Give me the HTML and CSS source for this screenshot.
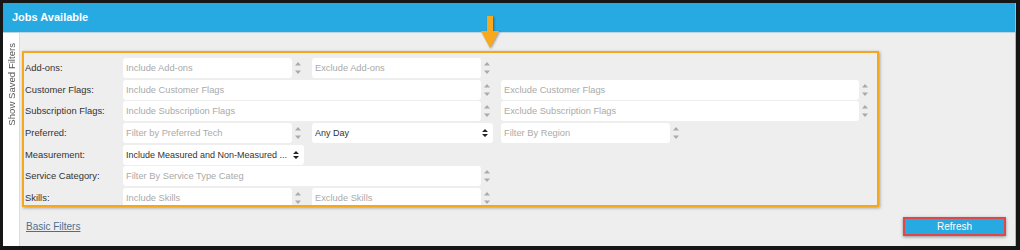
FILE: index.html
```html
<!DOCTYPE html>
<html lang="en">
<head>
    <meta charset="UTF-8">
    <meta name="viewport" content="width=device-width, initial-scale=1.0">
    <title>Jobs Available</title>
    <link rel="stylesheet" href="styles.css">
</head>
<body>

    <div class="panel">
        <div class="panel-head">Jobs Available</div>

        <div class="panel-body">
            <!-- Saved filters tab -->
            <div class="saved-tab"><span>Show Saved Filters</span></div>

            <div class="filters-area">
                <div class="filter-box">
                    <div class="filter-grid">
                        <div class="label">Add-ons:</div>
                        <div class="field"><span class="box-input">Include Add-ons</span><span class="spin"><svg width="6" height="12" viewBox="0 0 6 12"><path d="M0 3.5L3 0L6 3.5Z M0 8.5L6 8.5L3 12Z" fill="#aaa"/></svg></span></div>
                        <div class="field"><span class="box-input">Exclude Add-ons</span><span class="spin"><svg width="6" height="12" viewBox="0 0 6 12"><path d="M0 3.5L3 0L6 3.5Z M0 8.5L6 8.5L3 12Z" fill="#aaa"/></svg></span></div>

                        <div class="label">Customer Flags:</div>
                        <div class="field wide"><span class="box-input">Include Customer Flags</span><span class="spin"><svg width="6" height="12" viewBox="0 0 6 12"><path d="M0 3.5L3 0L6 3.5Z M0 8.5L6 8.5L3 12Z" fill="#aaa"/></svg></span></div>
                        <div class="field wide"><span class="box-input">Exclude Customer Flags</span><span class="spin"><svg width="6" height="12" viewBox="0 0 6 12"><path d="M0 3.5L3 0L6 3.5Z M0 8.5L6 8.5L3 12Z" fill="#aaa"/></svg></span></div>

                        <div class="label">Subscription Flags:</div>
                        <div class="field wide"><span class="box-input">Include Subscription Flags</span><span class="spin"><svg width="6" height="12" viewBox="0 0 6 12"><path d="M0 3.5L3 0L6 3.5Z M0 8.5L6 8.5L3 12Z" fill="#aaa"/></svg></span></div>
                        <div class="field wide"><span class="box-input">Exclude Subscription Flags</span><span class="spin"><svg width="6" height="12" viewBox="0 0 6 12"><path d="M0 3.5L3 0L6 3.5Z M0 8.5L6 8.5L3 12Z" fill="#aaa"/></svg></span></div>

                        <div class="label">Preferred:</div>
                        <div class="field"><span class="box-input">Filter by Preferred Tech</span><span class="spin"><svg width="6" height="12" viewBox="0 0 6 12"><path d="M0 3.5L3 0L6 3.5Z M0 8.5L6 8.5L3 12Z" fill="#aaa"/></svg></span></div>
                        <div class="box-select"><span>Any Day</span><svg width="6" height="8" viewBox="0 0 6 8"><path d="M0 3L3 0L6 3Z M0 5L6 5L3 8Z" fill="#222"/></svg></div>
                        <div class="field"><span class="box-input">Filter By Region</span><span class="spin"><svg width="6" height="12" viewBox="0 0 6 12"><path d="M0 3.5L3 0L6 3.5Z M0 8.5L6 8.5L3 12Z" fill="#aaa"/></svg></span></div>

                        <div class="label">Measurement:</div>
                        <div class="box-select"><span>Include Measured and Non-Measured ...</span><svg width="6" height="8" viewBox="0 0 6 8"><path d="M0 3L3 0L6 3Z M0 5L6 5L3 8Z" fill="#222"/></svg></div>

                        <div class="label">Service Category:</div>
                        <div class="field wide"><span class="box-input">Filter By Service Type Categ</span><span class="spin"><svg width="6" height="12" viewBox="0 0 6 12"><path d="M0 3.5L3 0L6 3.5Z M0 8.5L6 8.5L3 12Z" fill="#aaa"/></svg></span></div>

                        <div class="label">Skills:</div>
                        <div class="field"><span class="box-input">Include Skills</span><span class="spin"><svg width="6" height="12" viewBox="0 0 6 12"><path d="M0 3.5L3 0L6 3.5Z M0 8.5L6 8.5L3 12Z" fill="#aaa"/></svg></span></div>
                        <div class="field"><span class="box-input">Exclude Skills</span><span class="spin"><svg width="6" height="12" viewBox="0 0 6 12"><path d="M0 3.5L3 0L6 3.5Z M0 8.5L6 8.5L3 12Z" fill="#aaa"/></svg></span></div>
                    </div>
                </div>

                <div class="filter-foot">
                    <a href="#">Basic Filters</a>
                    <button class="refresh-btn">Refresh</button>
                </div>
            </div>
        </div>

        <!-- annotation arrow -->
        <svg class="pointer" width="22" height="34" viewBox="0 0 22 34">
            <path d="M7 0H13V15H19L10 32L1 15H7Z" fill="#f7a81d" filter="drop-shadow(1px 1px 1px rgba(0,0,0,0.35))"/>
        </svg>
    </div>

</body>
</html>
```

FILE: styles.css
```css
* {
    margin: 0;
    padding: 0;
    box-sizing: border-box;
}

body {
    font-family: "Liberation Sans", Arial, sans-serif;
    background-color: #161616;
}

.panel {
    position: relative;
    margin: 3px 4px 0 3px;
    height: 243px;
    background-color: #eee;
    border-right: 1px solid #b5b5b5;
    display: flex;
    flex-direction: column;
}

.panel-head {
    height: 30px;
    line-height: 29px;
    background-color: #27a9e1;
    border-bottom: 1px solid #bcd5e0;
    color: #fff;
    font-weight: bold;
    font-size: 11px;
    padding-left: 9px;
}

.panel-body {
    flex: 1;
    display: flex;
}

.saved-tab {
    width: 17px;
    background-color: #fff;
    border-right: 1px solid #ddd;
    display: flex;
    justify-content: center;
    align-items: flex-start;
    padding-top: 10px;
}

.saved-tab span {
    writing-mode: vertical-rl;
    transform: rotate(180deg);
    font-size: 9.6px;
    color: #555;
}

.filters-area {
    flex: 1;
    padding-top: 18px;
}

.filter-box {
    margin-left: 2px;
    width: 857px;
    height: 156px;
    border: 2px solid #f6a81c;
    box-shadow: 1px 1px 3px rgba(0, 0, 0, 0.35);
    overflow: hidden;
}

.filter-grid {
    display: grid;
    grid-template-columns: 90px repeat(4, 181px);
    grid-auto-rows: 20px;
    row-gap: 1.67px;
    column-gap: 8px;
    padding: 5px 0 0 1px;
}

.label {
    grid-column: 1;
    font-size: 9.4px;
    line-height: 20px;
    color: #333;
    white-space: nowrap;
}

.field {
    display: flex;
}

.field.wide {
    grid-column: span 2;
}

.box-input {
    flex: 1;
    background-color: #fff;
    border-radius: 3px;
    font-size: 9.3px;
    line-height: 20px;
    color: #aaa;
    padding-left: 3px;
    white-space: nowrap;
    overflow: hidden;
}

.spin {
    width: 12px;
    display: flex;
    justify-content: center;
    align-items: center;
}

.box-select {
    background-color: #fff;
    border-radius: 3px;
    display: flex;
    justify-content: space-between;
    align-items: center;
    gap: 2px;
    padding: 0 5px 0 3px;
    font-size: 9px;
    color: #333;
    white-space: nowrap;
}

.box-select svg {
    flex-shrink: 0;
}

.filter-foot {
    display: flex;
    justify-content: space-between;
    align-items: center;
    margin-top: 10px;
    padding: 0 9px 0 6px;
}

.filter-foot a {
    font-size: 10px;
    color: #4c6f90;
}

.refresh-btn {
    width: 103px;
    height: 19px;
    border: 2px solid #e1474a;
    background-color: #27a9e1;
    color: #fff;
    font-family: inherit;
    font-size: 10px;
    box-shadow: 0 1px 3px rgba(0, 0, 0, 0.4);
    cursor: pointer;
}

.pointer {
    position: absolute;
    left: 477px;
    top: 13px;
}
```
